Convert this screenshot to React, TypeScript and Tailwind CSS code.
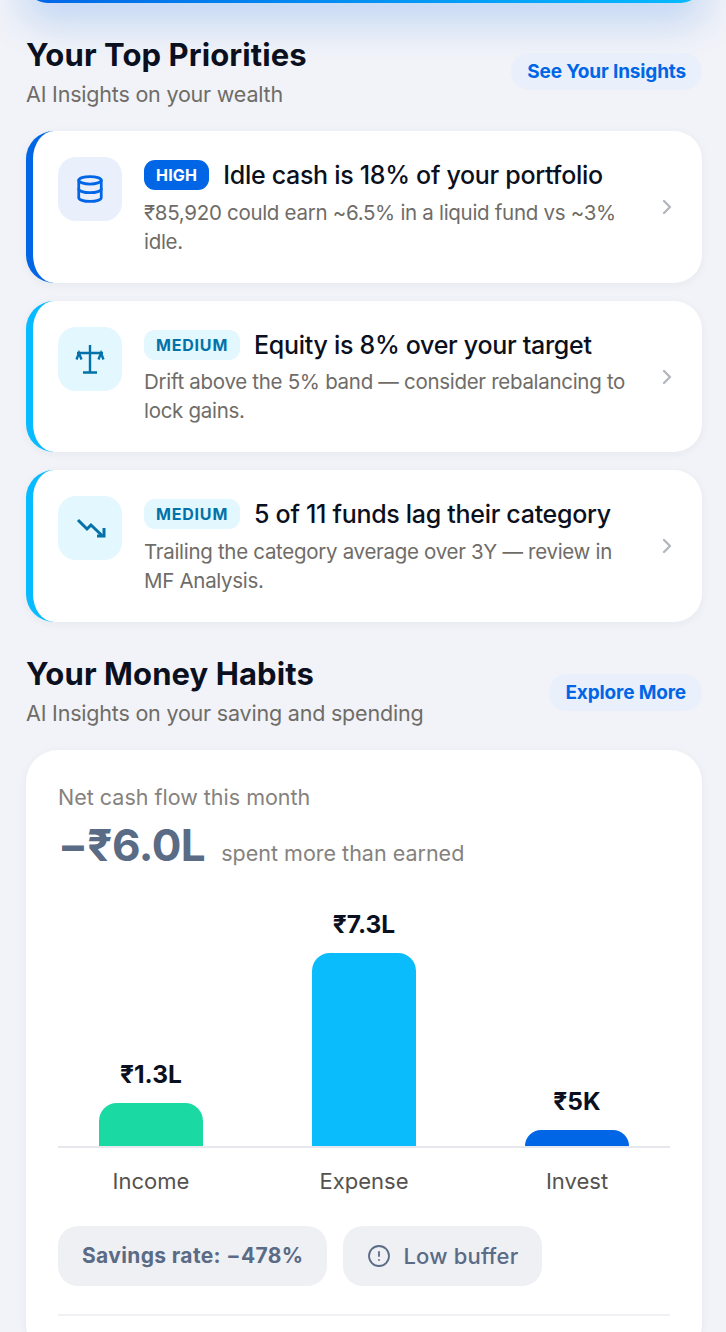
import { AlertCircle, ChevronRight, Database } from "lucide-react";
import type { ReactNode } from "react";

type Priority = {
  level: "HIGH" | "MEDIUM";
  title: string;
  body: string;
  icon: ReactNode;
};

function BalanceIcon() {
  return (
    <svg viewBox="0 0 32 32" className="h-8 w-8" fill="none" stroke="currentColor" strokeWidth="2.4">
      <path d="M16 2v27.5M3 10h26M9 29.5h14" />
      <path d="M2.5 16.5 5 10l2.5 6.5M24.5 16.5 27 10l2.5 6.5" />
    </svg>
  );
}

function ZigzagDownIcon() {
  return (
    <svg viewBox="0 0 32 32" className="h-8 w-8" fill="none" stroke="currentColor" strokeWidth="3">
      <path d="M4 8 13 17 17 13 28 23.5" />
      <path d="M23 24H30V16" />
    </svg>
  );
}

const priorities: Priority[] = [
  {
    level: "HIGH",
    title: "Idle cash is 18% of your portfolio",
    body: "₹85,920 could earn ~6.5% in a liquid fund vs ~3% idle.",
    icon: <Database className="h-[30px] w-[30px]" strokeWidth={2.2} />,
  },
  {
    level: "MEDIUM",
    title: "Equity is 8% over your target",
    body: "Drift above the 5% band — consider rebalancing to lock gains.",
    icon: <BalanceIcon />,
  },
  {
    level: "MEDIUM",
    title: "5 of 11 funds lag their category",
    body: "Trailing the category average over 3Y — review in MF Analysis.",
    icon: <ZigzagDownIcon />,
  },
];

function SectionHead({ title, sub, action, actionClass }: { title: string; sub: string; action: string; actionClass: string }) {
  return (
    <div className="flex items-start justify-between">
      <div>
        <h2 className="text-[31px] leading-[36px] font-bold tracking-[0.1px] text-[#0b1020]">{title}</h2>
        <p className="mt-[7px] text-[21.5px] leading-[28px] tracking-[-0.2px] text-[#6f6c68]">{sub}</p>
      </div>
      <span className={`rounded-[18px] bg-[#e9f0fc] px-4 py-[6px] text-[19px] leading-[25px] font-bold tracking-[-0.15px] text-[#0066e6] ${actionClass}`}>
        {action}
      </span>
    </div>
  );
}

function PriorityCard({ item }: { item: Priority }) {
  const high = item.level === "HIGH";
  return (
    <div
      className={`flex items-center rounded-[28px] border-l-[7px] bg-white pt-[26px] pr-[23px] pb-[27px] pl-[25px] shadow-[0_2px_10px_rgba(20,30,60,0.05)] ${
        high ? "border-[#0066e6]" : "border-[#06bbff]"
      }`}
    >
      <div className="flex flex-1 items-start gap-[22px]">
        <div
          className={`flex h-16 w-16 shrink-0 items-center justify-center rounded-[18px] ${
            high ? "bg-[#e9f0fc] text-[#0066e6]" : "bg-[#e3f7ff] text-[#0272a8]"
          }`}
        >
          {item.icon}
        </div>
        <div className="min-w-0 flex-1 pt-[2px]">
          <div className="flex items-center gap-[14px]">
            <span
              className={`rounded-[11px] px-3 text-[16px] leading-[30px] font-bold ${
                high ? "bg-[#0066e6] tracking-[0.2px] text-white" : "bg-[#e3f7ff] tracking-[0.8px] text-[#0272a8]"
              }`}
            >
              {item.level}
            </span>
            <span className="text-[25px] leading-[32px] font-medium tracking-[-0.3px] text-[#0b1020]">{item.title}</span>
          </div>
          <p className="mt-[6.5px] text-[20.5px] leading-[29px] tracking-[-0.3px] text-[#6f6c68]">{item.body}</p>
        </div>
      </div>
      <ChevronRight className="mt-[2px] ml-[20px] h-[24px] w-[24px] shrink-0 text-[#b4b7bd]" strokeWidth={2.4} />
    </div>
  );
}

function Bar({ value, height, color }: { value: string; height: number; color: string }) {
  return (
    <div className="flex w-[104px] flex-col items-center justify-end">
      <span className="mb-[14px] text-[24.5px] leading-[30px] font-bold whitespace-nowrap text-[#0b1020]">{value}</span>
      <div className={`w-[104px] shrink-0 rounded-t-[18px] ${color}`} style={{ height }} />
    </div>
  );
}

export default function App() {
  return (
    <div className="h-[1332px] overflow-hidden bg-[#f1f3f8] font-['Inter',sans-serif]">
      <div className="mt-[-40px] mr-[24px] ml-[26px] h-[43px] rounded-[28px] bg-[linear-gradient(90deg,#0066e6,#06bbff)] shadow-[0_14px_40px_6px_rgba(0,102,230,0.2)]" />

      <div className="pt-[34px] pr-[24px] pl-[26px]">
        <SectionHead title="Your Top Priorities" sub="AI Insights on your wealth" action="See Your Insights" actionClass="mt-[16px]" />

        <div className="mt-[23px] flex flex-col gap-[18px]">
          {priorities.map((p) => (
            <PriorityCard key={p.title} item={p} />
          ))}
        </div>

        <div className="mt-[34.5px]">
          <SectionHead title="Your Money Habits" sub="AI Insights on your saving and spending" action="Explore More" actionClass="mt-[17.5px]" />
        </div>

        <div className="mt-[23px] rounded-[32px] bg-white px-8 pt-[32px] pb-10 shadow-[0_2px_10px_rgba(20,30,60,0.05)]">
          <p className="text-[21.5px] leading-[30px] text-[#85827e]">Net cash flow this month</p>
          <div className="mt-[6px] flex items-baseline gap-4">
            <span className="text-[44px] leading-[54px] font-bold tracking-[-0.5px] text-[#5a6b85]">−₹6.0L</span>
            <span className="text-[21.5px] text-[#85827e]">spent more than earned</span>
          </div>

          <div className="mt-[37px] flex h-[239px] justify-between border-b-2 border-[#e6e8ee] px-[41px]">
            <Bar value="₹1.3L" height={43} color="bg-[#1bd9a3]" />
            <Bar value="₹7.3L" height={193} color="bg-[#0abcfc]" />
            <Bar value="₹5K" height={16} color="bg-[#0066e6]" />
          </div>
          <div className="mt-[18px] flex justify-between px-[41px] text-center text-[22px] leading-[30px] text-[#55524e]">
            <span className="w-[104px]">Income</span>
            <span className="w-[104px]">Expense</span>
            <span className="w-[104px]">Invest</span>
          </div>

          <div className="mt-[30px] flex gap-4">
            <span className="flex h-[60px] items-center rounded-[20px] bg-[#eff0f4] px-6 text-[21px] font-bold tracking-[0.35px] text-[#5a6b85]">
              Savings rate: −478%
            </span>
            <span className="flex h-[60px] items-center gap-[12px] rounded-[20px] bg-[#eff0f4] px-6 text-[22px] font-medium tracking-[0.2px] text-[#5a6b85]">
              <AlertCircle className="h-6 w-6" strokeWidth={1.8} />
              Low buffer
            </span>
          </div>
          <div className="mt-[28px] h-[2px] bg-[#f0f1f5]" />
        </div>
      </div>
    </div>
  );
}
